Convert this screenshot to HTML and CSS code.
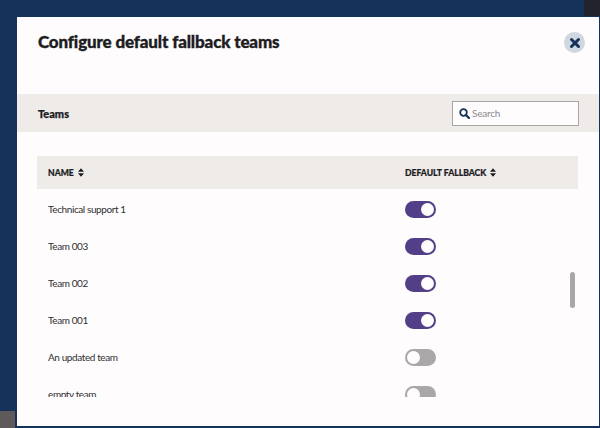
FILE: index.html
```html
<!DOCTYPE html>
<html lang="en">
<head>
<meta charset="utf-8">
<title>Configure default fallback teams</title>
<link rel="stylesheet" href="styles.css">
</head>
<body>
<div class="corner-top"></div>
<div class="corner-bottom"></div>
<main class="modal">
  <header class="modal-head">
    <h1 class="title">Configure default fallback teams</h1>
    <button class="close" aria-label="Close">
      <svg width="12" height="12" viewBox="0 0 12 12"><path d="M2.5 2.5 9.5 9.5M9.5 2.5 2.5 9.5" stroke="#14325a" stroke-width="3" stroke-linecap="round" fill="none"/></svg>
    </button>
  </header>
  <section class="band">
    <h2 class="band-title">Teams</h2>
    <label class="search">
      <svg width="11" height="11" viewBox="0 0 11 11"><circle cx="4.5" cy="4.5" r="3.3" stroke="#14325a" stroke-width="1.8" fill="none"/><path d="M7 7 10 10" stroke="#14325a" stroke-width="2.2" stroke-linecap="round"/></svg>
      <span class="placeholder">Search</span>
    </label>
  </section>
  <section class="table">
    <div class="thead">
      <div class="th col-name">NAME <svg class="sort" width="6" height="9" viewBox="0 0 7 10"><path d="M3.5 0 7 4H0ZM3.5 10 0 6H7Z" fill="#1d1d1f"/></svg></div>
      <div class="th col-fb">DEFAULT FALLBACK <svg class="sort" width="6" height="9" viewBox="0 0 7 10"><path d="M3.5 0 7 4H0ZM3.5 10 0 6H7Z" fill="#1d1d1f"/></svg></div>
    </div>
    <div class="tbody">
      <div class="row"><div class="col-name">Technical support 1</div><div class="col-fb"><span class="toggle on"></span></div></div>
      <div class="row"><div class="col-name">Team 003</div><div class="col-fb"><span class="toggle on"></span></div></div>
      <div class="row"><div class="col-name">Team 002</div><div class="col-fb"><span class="toggle on"></span></div></div>
      <div class="row"><div class="col-name">Team 001</div><div class="col-fb"><span class="toggle on"></span></div></div>
      <div class="row"><div class="col-name">An updated team</div><div class="col-fb"><span class="toggle"></span></div></div>
      <div class="row"><div class="col-name">empty team</div><div class="col-fb"><span class="toggle"></span></div></div>
    </div>
    <div class="thumb"></div>
  </section>
</main>
</body>
</html>
```
FILE: styles.css
```css
* { box-sizing: border-box; }
html, body { margin: 0; height: 428px; overflow: hidden; }
body {
  position: relative;
  background: #14325a;
  padding: 17px 1px 2px 17px;
  font-family: "Lato", "Noto Sans", sans-serif;
  color: #1d1d1f;
}
.corner-top { position: absolute; top: 0; right: 0; width: 16px; height: 16px; background: #22232d; }
.corner-bottom { position: absolute; left: 0; bottom: 0; width: 15px; height: 17px; background: #5f5a5a; }
.modal {
  position: relative;
  height: 100%;
  background: #fefcfd;
}
.modal-head {
  height: 77px;
  display: flex;
  justify-content: space-between;
  align-items: flex-start;
  padding: 15px 14px 0 21px;
}
.title {
  margin: 0;
  font-size: 17px; font-weight: 900; line-height: 20px;
  letter-spacing: -0.15px;
  -webkit-text-stroke: 0.35px #1d1d1f;
}
.close {
  width: 21px; height: 21px;
  border: 0; border-radius: 50%; padding: 0;
  background: #d0d7e0;
  display: flex; align-items: center; justify-content: center;
}
.band {
  height: 38px;
  background: #efebe8;
  display: flex;
  align-items: center;
  justify-content: space-between;
  padding: 0 20px 0 21px;
}
.band-title {
  margin: 0;
  font-size: 11px; font-weight: 900;
  -webkit-text-stroke: 0.25px #1d1d1f;
}
.search {
  width: 127px; height: 25px;
  border: 1px solid #a9a7a5;
  background: #fefcfd;
  display: flex; align-items: center; gap: 2px;
  padding: 0 6px;
}
.placeholder { font-size: 10px; letter-spacing: -0.2px; color: #8b8b8d; }
.table { position: relative; padding: 24px 21px 0 20px; }
.thead {
  height: 33px;
  background: #efebe8;
  display: flex; align-items: center;
}
.th {
  font-size: 8.6px; font-weight: 900;
  -webkit-text-stroke: 0.2px #1d1d1f;
  display: flex; align-items: center; gap: 4px;
}
.col-name { width: 368px; padding-left: 11px; }
.tbody { height: 208px; overflow: hidden; padding-top: 2px; }
.row {
  height: 37px;
  display: flex; align-items: center;
  font-size: 10px; letter-spacing: -0.4px; color: #2f2f31;
}
.row .col-name { padding-bottom: 2px; }
.toggle {
  display: block; position: relative;
  width: 31px; height: 17px; border-radius: 9px;
  background: #a9a7a8;
}
.toggle::after {
  content: ""; position: absolute; top: 2px; left: 2px;
  width: 13px; height: 13px; border-radius: 50%;
  background: #fefcfd;
}
.toggle.on { background: #523f87; }
.toggle.on::after { left: 16px; }
.thumb {
  position: absolute; top: 140px; right: 24px;
  width: 5px; height: 36px; border-radius: 3px;
  background: #a9a7a8;
}
```
